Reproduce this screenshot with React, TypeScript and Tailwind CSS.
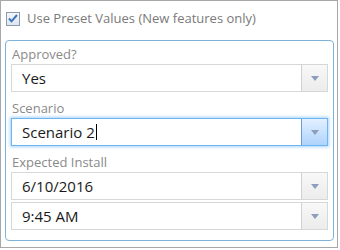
import React from "react";

function Arrow() {
  return (
    <svg width="8" height="5" viewBox="0 0 8 5" className="block">
      <path d="M0 0h8L4 5z" fill="#8e9dbb" />
    </svg>
  );
}

function DropBox({ value, focused = false, caret = false }: { value: string; focused?: boolean; caret?: boolean }) {
  return (
    <div
      className={`flex h-[28px] border ${
        focused ? "border-[#6cb6f5] shadow-[0_0_3px_1px_rgba(108,182,245,0.6)]" : "border-[#d7d7d7]"
      }`}
    >
      <div className="flex flex-1 items-center bg-white pl-[10px] text-[15px] text-[#1a1a1a]">
        {value}
        {caret && <span className="ml-[1px] inline-block h-[16px] w-[1px] bg-black" />}
      </div>
      <div
        className={`flex w-[26px] items-center justify-center border-l ${
          focused
            ? "border-[#6b9bd1] bg-gradient-to-b from-[#e3f0ff] to-[#afd3fc]"
            : "border-[#d0d0d0] bg-gradient-to-b from-[#f8f8f8] to-[#ececec]"
        }`}
      >
        <Arrow />
      </div>
    </div>
  );
}

function Label({ children }: { children: React.ReactNode }) {
  return <div className="h-[23px] pl-[1px] pt-[5px] text-[13px] leading-[16px] text-[#8a8a8a]">{children}</div>;
}

export default function App() {
  return (
    <div className="h-[248px] w-[338px] border border-[#a8a8a8] bg-white" style={{ fontFamily: '"Open Sans", sans-serif' }}>
      <div className="flex h-[39px] items-center gap-[7px] pb-[4px] pl-[5px]">
        <div className="flex h-[14px] w-[14px] items-center justify-center border border-[#8f9aab] bg-gradient-to-b from-[#f4f7fb] to-[#dde6f2]">
          <svg width="10" height="9" viewBox="0 0 10 9">
            <path d="M1 4.5l2.5 2.8L9 1" fill="none" stroke="#3c73b8" strokeWidth="2" />
          </svg>
        </div>
        <span className="text-[13px] text-[#7a7a7a]">Use Preset Values (New features only)</span>
      </div>
      <div className="ml-[4px] mr-[3px] rounded-[4px] border border-[#7fb2d8] px-[5px] pb-[10px]">
        <Label>Approved?</Label>
        <DropBox value="Yes" />
        <div className="h-[3px]" />
        <Label>Scenario</Label>
        <DropBox value="Scenario 2" focused caret />
        <div className="h-[3px]" />
        <Label>Expected Install</Label>
        <DropBox value="6/10/2016" />
        <div className="h-[2px]" />
        <DropBox value="9:45 AM" />
      </div>
    </div>
  );
}
